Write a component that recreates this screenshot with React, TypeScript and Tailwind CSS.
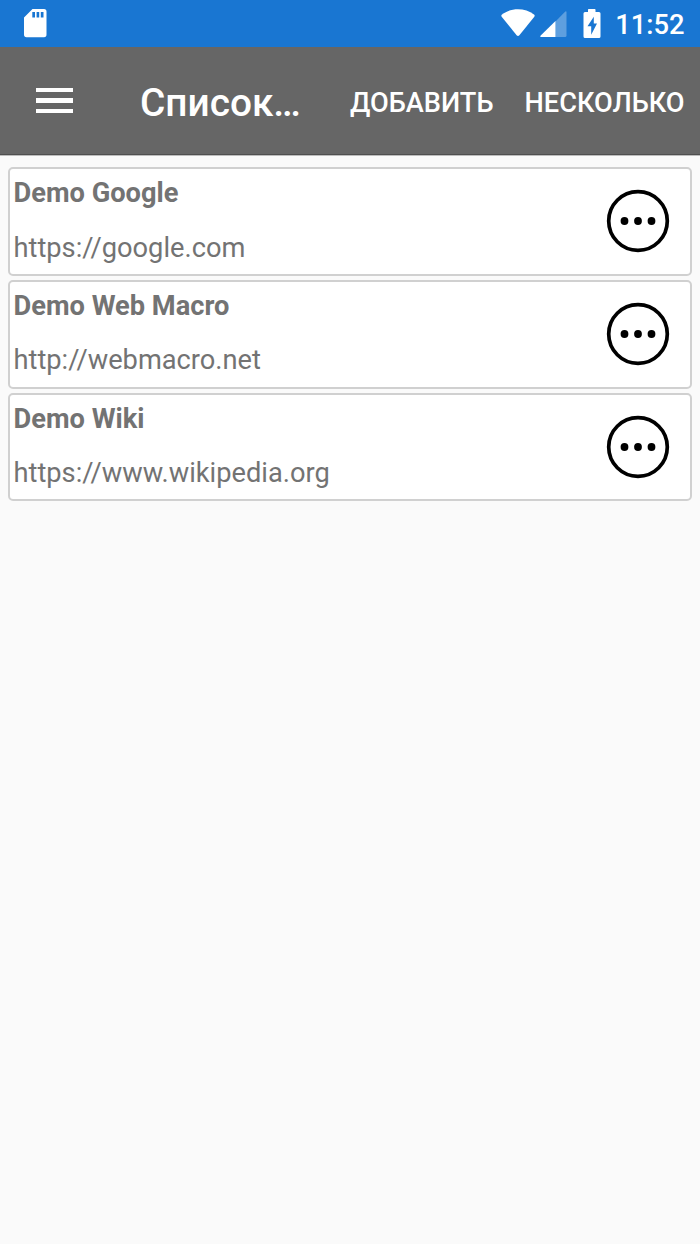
import React from 'react';

const sites = [
    { name: "Demo Google", url: "https://google.com" },
    { name: "Demo Web Macro", url: "http://webmacro.net" },
    { name: "Demo Wiki", url: "https://www.wikipedia.org" },
];

const StatusBar = () => {
    return (
        <div className="h-[47px] bg-[#1976d2] text-white flex items-center justify-between pl-6 pr-[15.500px]">
            <svg width="23" height="29" viewBox="0 0 23 29" fill="currentColor">
                <path fillRule="evenodd" d="M8.5 0H20Q22.5 0 22.5 2.5V25.500Q22.500 28.300 20 28.300H2.500Q0 28.300 0 25.500V8.500ZM8.300 3V8.500H11V3ZM12.600 3V8.500H15.200V3ZM16.800 3V8.500H19.500V3Z"/>
            </svg>

            <div className="flex items-center">
                <svg width="34" height="29" viewBox="0 0 34 29" fill="currentColor" className="mr-[5px]">
                    <path d="M1 5.500C10 -1.500 24 -1.500 33 5.500Q34.200 6.500 33.300 7.700L18.400 26.300Q17 27.700 15.600 26.300L0.700 7.700Q-0.200 6.500 1 5.500Z"/>
                </svg>
                <svg width="27" height="29" viewBox="0 0 27 29" fill="currentColor" className="mr-4">
                    <path opacity="0.3" d="M26.500 3.500Q26.500 1.300 24.800 3L15.500 12.500V28H25Q26.500 28 26.500 26.500Z"/>
                    <path d="M15.500 12L0.700 26.500Q-0.300 28 1.200 28H15.500Z"/>
                </svg>
                <svg width="18" height="29" viewBox="0 0 18 29" fill="currentColor" className="mr-[14px]">
                    <path fillRule="evenodd" d="M5 3V0.700Q5 0 5.700 0H11.800Q12.500 0 12.500 0.700V3H16Q17.500 3 17.500 4.500V27.500Q17.500 29 16 29H2Q0.500 29 0.500 27.500V4.500Q0.500 3 2 3ZM10.800 7.700L4.500 17.300H8.200V25.800L14 14.600H10.800Z"/>
                </svg>
                <span className="pt-1 text-[27.300px] leading-none font-medium">11:52</span>
            </div>
        </div>
    );
};

const Toolbar = () => {
    return (
        <div className="h-[108px] bg-[#666666] border-b border-[#4f4f4f] shadow-[0_1px_0_#bdbdbd] text-white flex items-center pl-9 pr-[15.500px]">
            <button className="w-[37px] flex flex-col gap-[6px] pb-px">
                <span className="w-full h-[4px] bg-white"/>
                <span className="w-full h-[5px] bg-white"/>
                <span className="w-full h-[4px] bg-white"/>
            </button>
            <h1 className="ml-[67px] pt-[6px] text-[38.800px] leading-none font-medium">Список…</h1>
            <div className="ml-auto pt-[6px] flex gap-[31px] text-[27.200px] leading-none font-medium">
                <button>ДОБАВИТЬ</button>
                <button>НЕСКОЛЬКО</button>
            </div>
        </div>
    );
};

const SiteCard = ({ name, url }: { name: string; url: string }) => {
    return (
        <div className="h-[108.800px] bg-white border-2 border-[#d0d0d0] rounded-[5px] flex items-center justify-between pl-[3.500px] pr-5">
            <div className="pb-[2px] text-[27.240px] leading-8 text-[#737373] flex flex-col gap-[22.500px]">
                <div className="font-bold">{name}</div>
                <div>{url}</div>
            </div>
            <button>
                <svg width="64" height="64" viewBox="0 0 64 64">
                    <circle cx="32" cy="32" r="29.300" fill="none" stroke="#000" strokeWidth="3.700"/>
                    <circle cx="18.500" cy="32" r="3.900"/>
                    <circle cx="32" cy="32" r="3.900"/>
                    <circle cx="45.500" cy="32" r="3.900"/>
                </svg>
            </button>
        </div>
    );
};

const App = () => {
    return (
        <div className="min-h-screen bg-[#fafafa] font-['Roboto',sans-serif]">
            <StatusBar/>
            <Toolbar/>
            <div className="px-2 pt-3 flex flex-col gap-1">
                {sites.map((site) => (
                    <SiteCard key={site.url} name={site.name} url={site.url}/>
                ))}
            </div>
        </div>
    );
};

export default App;
